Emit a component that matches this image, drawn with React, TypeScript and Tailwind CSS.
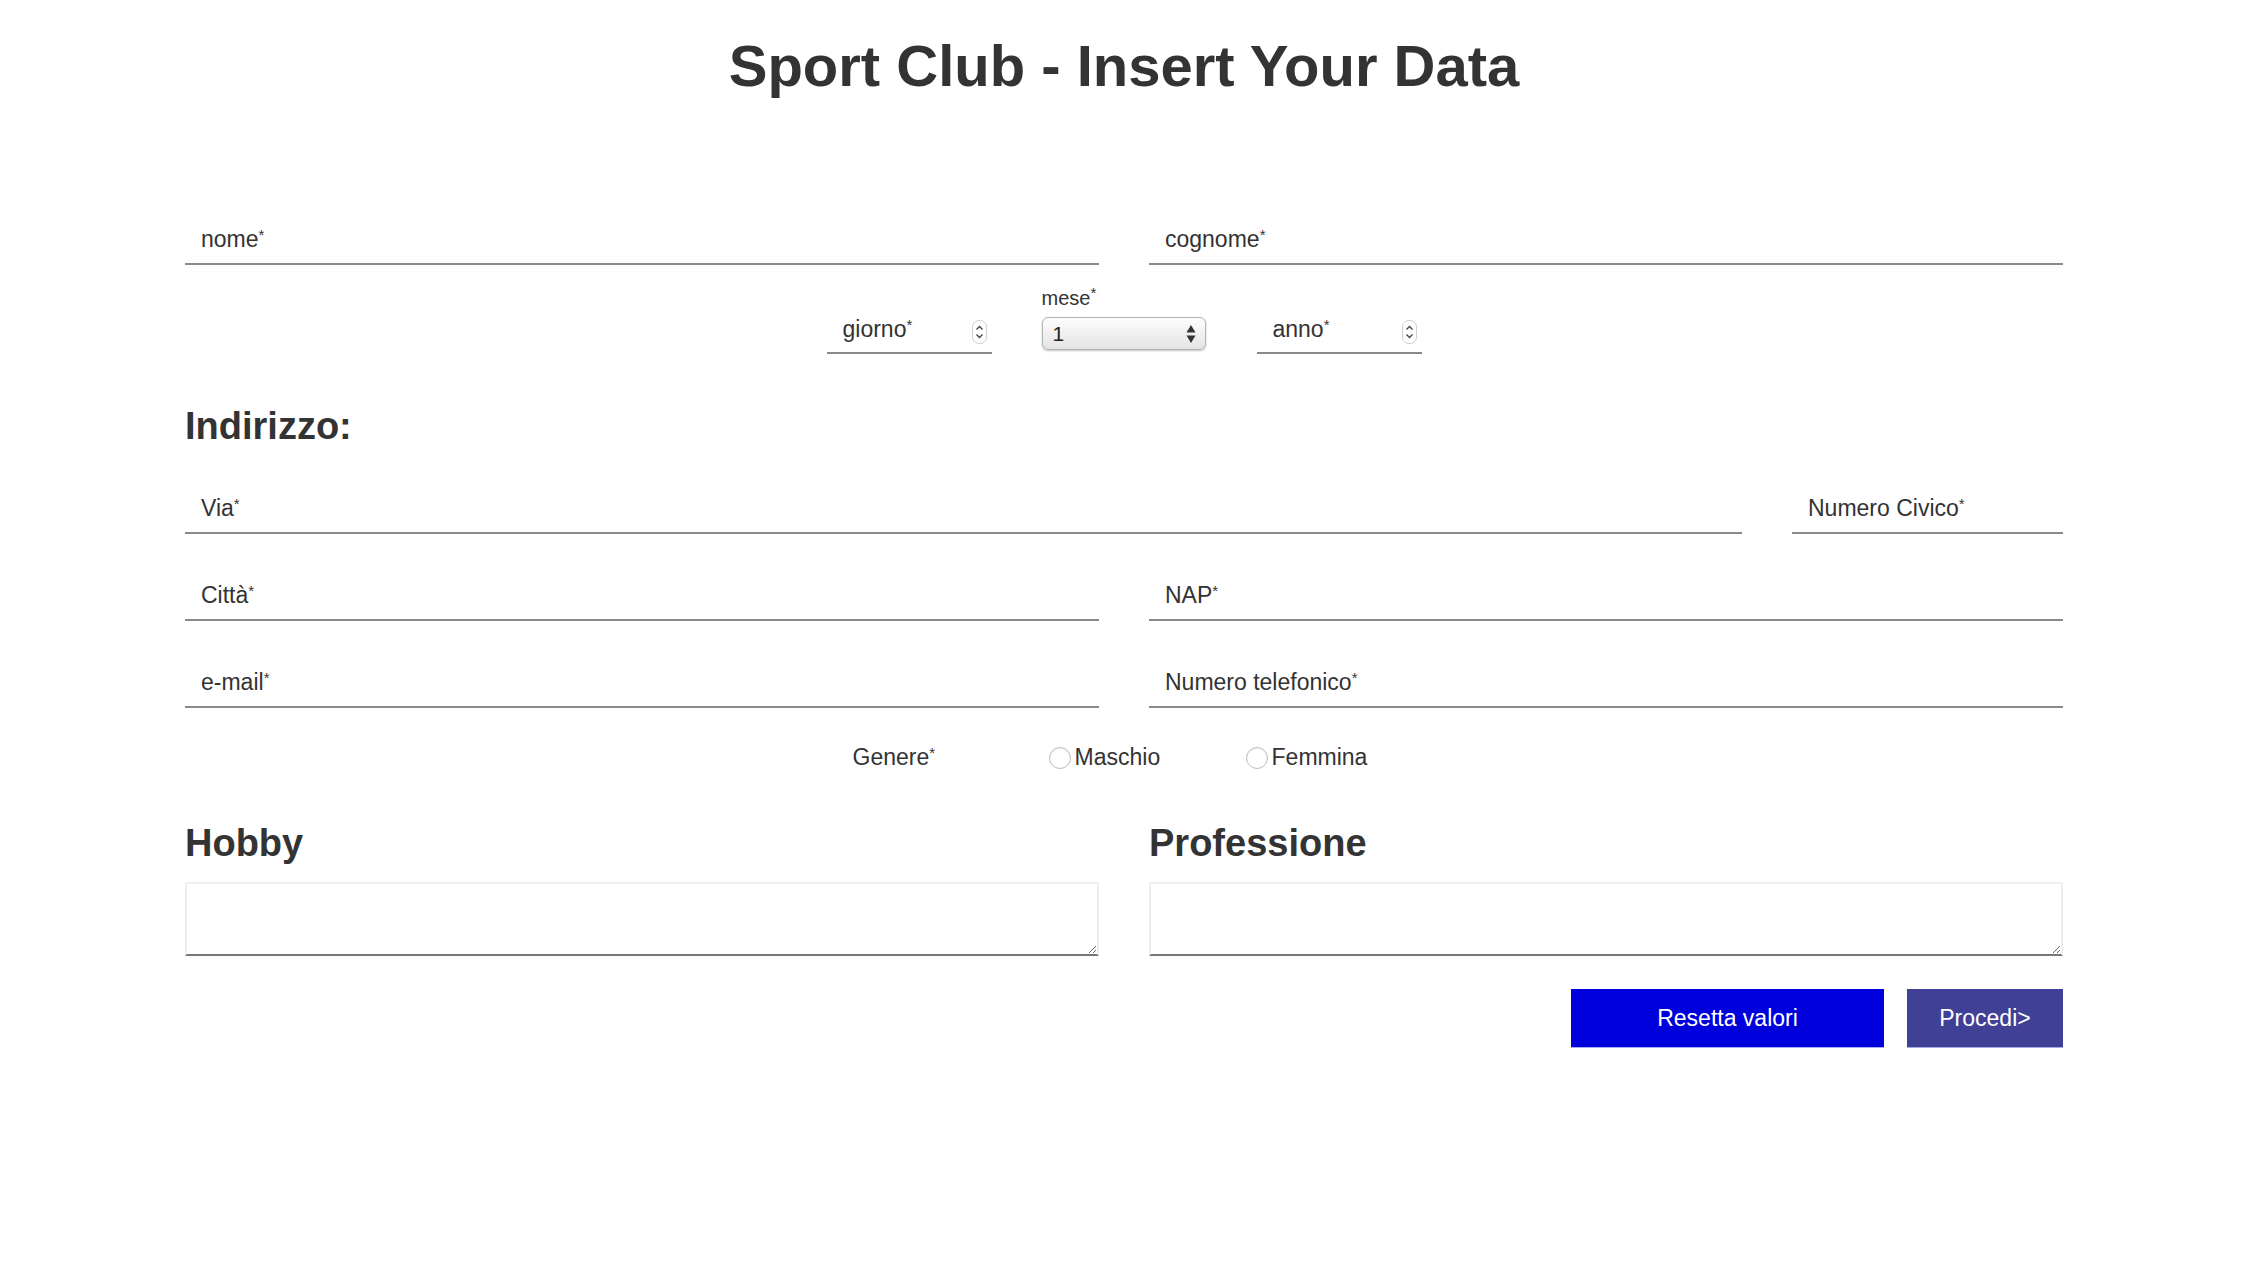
import React from 'react';

function Star() {
  return <sup className="relative -top-[7px] align-baseline text-[15px] leading-none">*</sup>;
}

function Field({ label, className = '' }: { label: string; className?: string }) {
  return (
    <div className={`border-b-2 border-[#8a8a8a] pb-[10px] pl-4 text-[23px] leading-[27px] ${className}`}>
      <span>
        {label}
        <Star />
      </span>
    </div>
  );
}

function Spinner() {
  return (
    <div className="ml-auto mr-[5px] mt-[4px] flex h-[24px] w-[15px] flex-col items-center justify-center rounded-[7px] border border-[#cfcfcf] bg-white">
      <svg width="9" height="18" viewBox="0 0 9 18" fill="none" stroke="#444" strokeWidth="1.4">
        <path d="M1.5 6.5 L4.5 3.5 L7.5 6.5" />
        <path d="M1.5 11.5 L4.5 14.5 L7.5 11.5" />
      </svg>
    </div>
  );
}

function NumberField({ label }: { label: string }) {
  return (
    <div className="flex w-[165px] items-start border-b-2 border-[#8a8a8a] pb-[8px] pl-4 text-[23px] leading-[27px]">
      <span>
        {label}
        <Star />
      </span>
      <Spinner />
    </div>
  );
}

function Radio({ label, className = '' }: { label: string; className?: string }) {
  return (
    <label className={`flex items-center ${className}`}>
      <span className="mr-[4px] h-[22px] w-[22px] rounded-full border border-[#bdbdbd] bg-white shadow-[inset_0_1px_1px_rgba(0,0,0,0.08)]" />
      <span className="text-[23px] leading-[27px]">{label}</span>
    </label>
  );
}

function App() {
  return (
    <div className="min-h-screen bg-white font-['Liberation_Sans',Arial,sans-serif] text-[#333]">
      <h1 className="pt-[37px] text-center text-[58px] font-bold leading-none">
        Sport Club - Insert Your Data
      </h1>

      <form className="px-[185px]">
        <div className="mt-[131px] grid grid-cols-2 gap-[50px]">
          <Field label="nome" />
          <Field label="cognome" />
        </div>

        <div className="mt-[21px] flex items-end justify-center gap-[50px]">
          <NumberField label="giorno" />
          <div className="flex w-[165px] flex-col">
            <span className="mb-[7px] text-[20px] leading-[24px]">
              mese
              <Star />
            </span>
            <div className="mb-[4px] flex h-[33px] w-[164px] items-center justify-between rounded-[6px] border border-[#b3b3b3] bg-gradient-to-b from-[#fdfdfd] to-[#e4e4e4] pl-[10px] pr-[9px] shadow-[0_1px_2px_rgba(0,0,0,0.25)]">
              <span className="text-[21px] leading-none text-[#222]">1</span>
              <svg width="10" height="20" viewBox="0 0 10 20" fill="#333">
                <path d="M5 1 L9.5 8.5 L0.5 8.5 Z" />
                <path d="M5 19 L9.5 11.5 L0.5 11.5 Z" />
              </svg>
            </div>
          </div>
          <NumberField label="anno" />
        </div>

        <h2 className="mt-[53px] text-[38px] font-bold leading-none">Indirizzo:</h2>

        <div className="mt-[50px] flex gap-[50px]">
          <Field label="Via" className="flex-1" />
          <Field label="Numero Civico" className="w-[271px]" />
        </div>

        <div className="mt-[48px] grid grid-cols-2 gap-[50px]">
          <Field label="Città" />
          <Field label="NAP" />
        </div>

        <div className="mt-[48px] grid grid-cols-2 gap-[50px]">
          <Field label="e-mail" />
          <Field label="Numero telefonico" />
        </div>

        <div className="mt-[36px] flex items-center justify-center pr-[28px]">
          <span className="w-[196px] text-[23px] leading-[27px]">
            Genere
            <Star />
          </span>
          <Radio label="Maschio" className="w-[197px]" />
          <Radio label="Femmina" />
        </div>

        <div className="mt-[53px] grid grid-cols-2 gap-[50px]">
          <div className="flex flex-col">
            <h2 className="text-[38px] font-bold leading-none">Hobby</h2>
            <textarea className="mt-[20px] h-[74px] w-full border-2 border-[#efefef] border-b-[#777] bg-white outline-none" />
          </div>
          <div className="flex flex-col">
            <h2 className="text-[38px] font-bold leading-none">Professione</h2>
            <textarea className="mt-[20px] h-[74px] w-full border-2 border-[#efefef] border-b-[#777] bg-white outline-none" />
          </div>
        </div>

        <div className="mt-[33px] flex justify-end gap-[23px]">
          <button
            type="reset"
            className="h-[59px] w-[313px] border-b border-[#a9a9f5] bg-[#0000dd] text-[23px] text-white"
          >
            Resetta valori
          </button>
          <button
            type="button"
            className="h-[59px] w-[156px] border-b border-[#a9a9e0] bg-[#404096] text-[23px] text-white"
          >
            Procedi&gt;
          </button>
        </div>
      </form>
    </div>
  );
}

export default App;
